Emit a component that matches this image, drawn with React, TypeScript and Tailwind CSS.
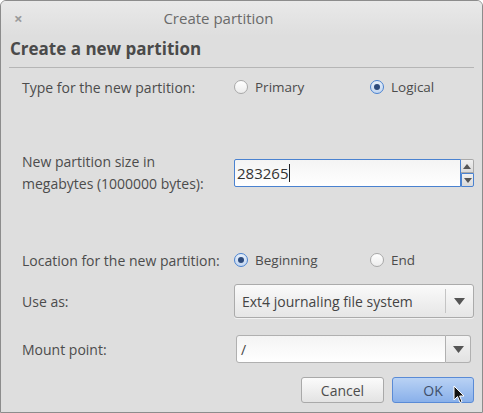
import React from 'react';

const font = { fontFamily: '"Open Sans", "Noto Sans", sans-serif' };

const Radio: React.FC<{ checked?: boolean; label: string }> = ({ checked, label }) => (
  <div className="flex items-center gap-[7px] text-[13.5px]">
    {checked ? (
      <span className="flex h-[14px] w-[14px] items-center justify-center rounded-full border border-[#4a82d0] bg-gradient-to-b from-[#e6effa] to-[#c3d6f0]">
        <span className="h-[6px] w-[6px] rounded-full bg-[#2c4a7c]" />
      </span>
    ) : (
      <span className="h-[14px] w-[14px] rounded-full border border-[#a9a9a9] bg-gradient-to-b from-[#ffffff] to-[#ececec]" />
    )}
    <span>{label}</span>
  </div>
);

const Arrow: React.FC = () => (
  <svg width="11" height="7" viewBox="0 0 11 7">
    <path d="M0 0 H11 L5.5 7 Z" fill="#555" />
  </svg>
);

const App: React.FC = () => {
  return (
    <div
      className="flex h-[413px] w-[483px] flex-col overflow-hidden rounded-t-[6px] border border-[#8c8c8c] bg-[#dedede] text-[14px] text-[#4c4c4c]"
      style={font}
    >
      {/* Title bar */}
      <div className="relative flex h-[35px] items-center justify-center bg-gradient-to-b from-[#e9e9e9] to-[#dedede] pr-[46px]">
        <span className="absolute left-[13px] top-[6px] text-[15px] font-bold text-[#9a9a9a]">×</span>
        <span className="text-[15px] text-[#6a6a6a]">Create partition</span>
      </div>

      {/* Header */}
      <div className="h-[31px] pl-[9px] pt-[1px] text-[17px] font-bold leading-[24px] text-[#4a4a4a]">
        Create a new partition
      </div>
      <div className="mx-[8px] border-t border-[#b5b5b5]" />

      <div className="flex flex-col pl-[21px] pr-[8px]">
        {/* Type */}
        <div className="flex h-[38px] items-center">
          <div className="w-[212px]">Type for the new partition:</div>
          <div className="w-[136px]">
            <Radio label="Primary" />
          </div>
          <Radio checked label="Logical" />
        </div>

        {/* Size */}
        <div className="mt-[44px] flex h-[46px] items-center">
          <div className="w-[212px] leading-[22px]">
            New partition size in
            <br />
            megabytes (1000000 bytes):
          </div>
          <div className="flex h-[28px] flex-1">
            <div className="flex flex-1 items-center rounded-l-[2px] border border-[#4a82d0] bg-gradient-to-b from-[#f4f4f4] to-[#ffffff] pl-[2px] text-[15px] text-[#333]">
              283265
              <span className="ml-[1px] h-[18px] w-[1px] bg-[#222]" />
            </div>
            <div className="flex w-[13px] flex-col">
              <div className="flex h-[14px] items-center justify-center rounded-tr-[2px] border border-l-0 border-[#a9a9a9] bg-gradient-to-b from-[#f0f0f0] to-[#dadada]">
                <svg width="8" height="5" viewBox="0 0 8 5">
                  <path d="M0 5 H8 L4 0 Z" fill="#555" />
                </svg>
              </div>
              <div className="flex h-[14px] items-center justify-center rounded-br-[2px] border border-[#4a82d0] bg-gradient-to-b from-[#f0f0f0] to-[#dadada]">
                <svg width="8" height="5" viewBox="0 0 8 5">
                  <path d="M0 0 H8 L4 5 Z" fill="#555" />
                </svg>
              </div>
            </div>
          </div>
        </div>

        {/* Location */}
        <div className="mt-[49px] flex h-[30px] items-center">
          <div className="w-[212px]">Location for the new partition:</div>
          <div className="w-[136px]">
            <Radio checked label="Beginning" />
          </div>
          <Radio label="End" />
        </div>

        {/* Use as */}
        <div className="mt-[9px] flex h-[34px] items-center">
          <div className="w-[212px]">Use as:</div>
          <div className="flex h-[34px] flex-1 items-center rounded-[3px] border border-[#ababab] bg-gradient-to-b from-[#fafafa] to-[#e6e6e6] shadow-[0_1px_0_#f2f2f2]">
            <span className="flex-1 pl-[7px] text-[#444]">Ext4 journaling file system</span>
            <span className="h-[24px] w-[1px] bg-[#c4c4c4]" />
            <span className="flex w-[27px] justify-center">
              <Arrow />
            </span>
          </div>
        </div>

        {/* Mount point */}
        <div className="mt-[17px] flex h-[28px] items-center pr-[3px]">
          <div className="w-[214px]">Mount point:</div>
          <div className="flex h-[28px] flex-1">
            <div className="flex flex-1 items-center rounded-l-[3px] border border-[#b0b0b0] bg-gradient-to-b from-[#f4f4f4] to-[#ffffff] pl-[4px] text-[#444]">
              /
            </div>
            <div className="flex w-[25px] items-center justify-center rounded-r-[3px] border border-l-0 border-[#b0b0b0] bg-gradient-to-b from-[#f4f4f4] to-[#e2e2e2]">
              <Arrow />
            </div>
          </div>
        </div>

        {/* Buttons */}
        <div className="mt-[14px] flex justify-end gap-[8px]">
          <button className="h-[26px] w-[83px] rounded-[3px] border border-[#a9a9a9] bg-gradient-to-b from-[#fbfbfb] to-[#e3e3e3] text-[#4c4c4c]">
            Cancel
          </button>
          <button className="relative h-[26px] w-[82px] rounded-[3px] border border-[#5a8bd6] bg-gradient-to-b from-[#b9d2f4] to-[#89b0ea] text-[#3f4f6a]">
            OK
            <svg
              className="absolute left-[60px] top-[7px]"
              width="12"
              height="19"
              viewBox="0 0 12 19"
            >
              <path d="M1 1 L1 15 L4.5 11.5 L7 17.5 L9 16.6 L6.6 11 L11 11 Z" fill="#111" stroke="#fff" strokeWidth="1" />
            </svg>
          </button>
        </div>
      </div>
    </div>
  );
};

export default App;
